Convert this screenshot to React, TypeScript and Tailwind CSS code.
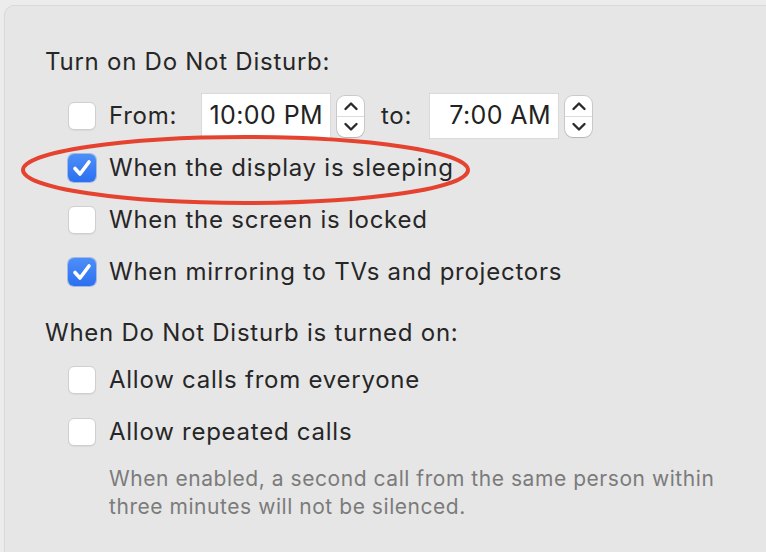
import React from 'react'

const font = { fontFamily: 'Inter, "Liberation Sans", Arial, sans-serif' }

function Checkbox({ checked }: { checked?: boolean }) {
  if (checked) {
    return (
      <div className="w-[28px] h-[28px] rounded-[6px] bg-gradient-to-b from-[#4d8ff8] to-[#2c6ff0] flex items-center justify-center shrink-0 shadow-[0_0_0_1px_rgba(40,100,220,0.35)]">
        <svg width="22" height="22" viewBox="0 0 22 22" fill="none">
          <path d="M4 11.5 L9 17 L18 5" stroke="white" strokeWidth="3.6" strokeLinecap="round" strokeLinejoin="round" />
        </svg>
      </div>
    )
  }
  return (
    <div className="w-[28px] h-[28px] rounded-[6px] bg-white border border-[#cfcfcf] shrink-0 shadow-[0_1px_1px_rgba(0,0,0,0.06)]" />
  )
}

function Row({ checked, children }: { checked?: boolean; children: React.ReactNode }) {
  return (
    <div className="h-[52px] flex items-center gap-[13px] ml-[23px]">
      <Checkbox checked={checked} />
      <div className="text-[24px] leading-[28px] tracking-[0.75px] text-[#262626]">{children}</div>
    </div>
  )
}

function Stepper() {
  return (
    <div className="w-[27px] h-[41px] rounded-[8px] bg-white shadow-[0_0_0_1px_rgba(0,0,0,0.12),0_1px_1px_rgba(0,0,0,0.1)] flex flex-col items-center shrink-0">
      <div className="flex-1 flex items-center justify-center">
        <svg width="16" height="10" viewBox="0 0 16 10" fill="none">
          <path d="M2.5 8 L8 2.5 L13.5 8" stroke="#2a2a2a" strokeWidth="2.4" strokeLinecap="round" strokeLinejoin="round" />
        </svg>
      </div>
      <div className="w-full h-px bg-[#dcdcdc]" />
      <div className="flex-1 flex items-center justify-center">
        <svg width="16" height="10" viewBox="0 0 16 10" fill="none">
          <path d="M2.5 2 L8 7.5 L13.5 2" stroke="#2a2a2a" strokeWidth="2.4" strokeLinecap="round" strokeLinejoin="round" />
        </svg>
      </div>
    </div>
  )
}

function TimeField({ value }: { value: string }) {
  return (
    <div className="w-[128px] h-[44px] bg-white shadow-[0_0_0_1px_rgba(0,0,0,0.05)] flex items-center justify-end pr-[7px] text-[25px] tracking-[0.4px] text-[#222] shrink-0">
      {value}
    </div>
  )
}

export default function App() {
  return (
    <div className="w-[766px] h-[552px] overflow-hidden bg-[#ececec] relative" style={font}>
      <div className="ml-[4px] mt-[5px] w-[800px] h-[600px] rounded-tl-[10px] border border-[#d9d9d9] bg-[#e6e6e6] pl-[40px] pt-[42px]">
        <div className="text-[24px] leading-[28px] tracking-[0.75px] text-[#262626]">Turn on Do Not Disturb:</div>
        <div className="mt-[14px]">
          <div className="h-[52px] flex items-center ml-[23px]">
            <Checkbox />
            <div className="ml-[13px] text-[24px] tracking-[0.75px] text-[#262626] w-[80px]">From:</div>
            <div className="ml-[13px] flex items-center">
              <TimeField value="10:00 PM" />
              <div className="ml-[7px]"><Stepper /></div>
              <div className="ml-[17px] text-[24px] tracking-[0.75px] text-[#262626] w-[49px]">to:</div>
              <TimeField value="7:00 AM" />
              <div className="ml-[7px]"><Stepper /></div>
            </div>
          </div>
          <Row checked>When the display is sleeping</Row>
          <Row>When the screen is locked</Row>
          <Row checked>When mirroring to TVs and projectors</Row>
        </div>
        <div className="mt-[21px] text-[24px] leading-[28px] tracking-[0.75px] text-[#262626]">When Do Not Disturb is turned on:</div>
        <div className="mt-[7px]">
          <Row>Allow calls from everyone</Row>
          <Row>Allow repeated calls</Row>
        </div>
        <div className="mt-[7px] ml-[64px] text-[21px] leading-[28px] tracking-[0.55px] text-[#7b7b7b] w-[680px]">
          When enabled, a second call from the same person within
          <br />
          three minutes will not be silenced.
        </div>
      </div>
      <svg className="absolute left-0 top-0 pointer-events-none" width="766" height="552">
        <ellipse cx="245.5" cy="170" rx="222.5" ry="33" fill="none" stroke="#e5432f" strokeWidth="4" />
      </svg>
    </div>
  )
}
